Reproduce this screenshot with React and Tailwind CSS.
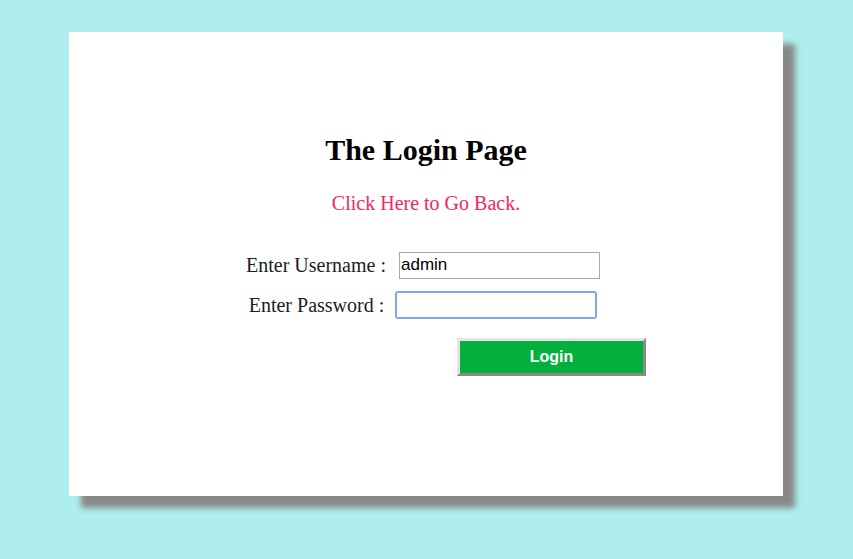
const App = () => {
  return (
    <div className="min-h-[559px] bg-[#afeeee] pt-[32px] pl-[69px] font-['Liberation_Serif',serif]">
      <div className="w-[714px] h-[464px] bg-white shadow-[12px_12px_6px_#888888] flex flex-col items-center">
        <h2 className="mt-[100px] text-[30px] leading-[36px] font-bold text-black">
          The Login Page
        </h2>
        <a href="#" className="mt-[23px] text-[20px] leading-[24px] text-[#f7245f]">
          Click Here to Go Back.
        </a>
        <div className="mt-[35px] mr-[6px] flex items-center text-[20px] text-[#1c1c24]">
          <span className="mr-[13px]">Enter Username :</span>
          <input
            type="text"
            defaultValue="admin"
            className="w-[201px] h-[27px] border border-[#a9a9a9] px-[1px] text-[17px] font-['Liberation_Sans',sans-serif] text-black outline-none"
          />
        </div>
        <div className="mt-[10px] mr-[6px] flex items-center text-[20px] text-[#1c1c24]">
          <span className="mr-[11px]">Enter Password :</span>
          <input
            type="password"
            className="w-[202px] h-[28px] border-2 border-[#7ea7f2] rounded-[3px] px-[1px] text-[17px] outline-none"
          />
        </div>
        <button className="mt-[18px] ml-[251px] w-[189px] h-[38px] bg-[#03b03e] border-[3px] border-t-[#e4e4e4] border-l-[#e4e4e4] border-b-[#8a8a8a] border-r-[#8a8a8a] text-white font-bold text-[16px] font-['Liberation_Sans',sans-serif]">
          Login
        </button>
      </div>
    </div>
  );
};

export default App;
